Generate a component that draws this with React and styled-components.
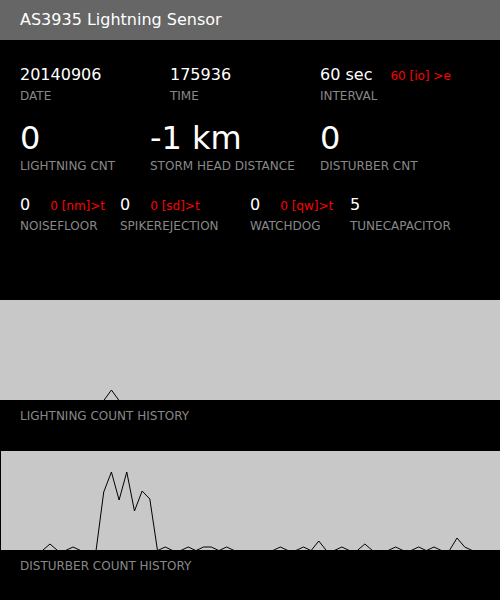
import React from 'react';
import styled, { createGlobalStyle } from 'styled-components';

const Global = createGlobalStyle`
  html, body { margin: 0; padding: 0; background: #000; }
  body { font-family: "DejaVu Sans", "Liberation Sans", sans-serif; }
`;

const Page = styled.div`
  width: 500px;
  height: 600px;
  background: #000;
  overflow: hidden;
  display: flex;
  flex-direction: column;
`;

const Header = styled.header`
  height: 40px;
  flex: none;
  background: #666666;
  color: #fff;
  font-size: 16px;
  line-height: 40px;
  padding-left: 20px;
`;

const StatRow = styled.div`
  display: grid;
  grid-template-columns: ${(p) => p.$cols};
  padding-left: 20px;
  margin-top: ${(p) => p.$top}px;
`;

const Cell = styled.div`
  display: flex;
  flex-direction: column;
`;

const ValueLine = styled.div`
  display: flex;
  align-items: baseline;
  white-space: nowrap;
  color: #fff;
  font-size: ${(p) => (p.$big ? 32 : 16)}px;
  line-height: ${(p) => (p.$big ? 35 : 22)}px;
`;

const Setting = styled.span`
  color: #f00;
  font-size: 12px;
  line-height: 1;
  margin-left: ${(p) => p.$gap}px;
`;

const Label = styled.div`
  color: #888;
  font-size: 12px;
  line-height: 20px;
  white-space: nowrap;
`;

const ChartBox = styled.div`
  height: ${(p) => p.$h}px;
  margin-top: ${(p) => p.$top}px;
  margin-left: ${(p) => p.$left}px;
  background: #c8c8c8;
  overflow: hidden;
  flex: none;
  svg { display: block; }
`;

const ChartLabel = styled(Label)`
  padding-left: 20px;
  margin-top: 6px;
`;

const Stat = ({ value, label, setting, gap = 20, big }) => (
  <Cell>
    <ValueLine $big={big}>
      <span>{value}</span>
      {setting && <Setting $gap={gap}>{setting}</Setting>}
    </ValueLine>
    <Label>{label}</Label>
  </Cell>
);

const disturber = { 6: 6, 9: 3, 13: 58, 14: 78, 15: 50, 16: 78, 17: 39, 18: 59, 19: 51, 21: 3, 24: 3, 26: 3, 27: 3, 29: 3, 36: 3, 39: 3, 41: 9, 44: 3, 47: 6, 51: 3, 54: 3, 56: 3, 59: 12, 60: 3 };
const lightning = { 14: 10 };

const Chart = ({ data, h, top, left }) => {
  const pts = [];
  for (let i = 0; i < 66; i++) {
    const v = data[i] || 0;
    const x = 3.9 + 7.68 * i - left;
    const y = v === 0 ? h + 0.6 : h - v;
    pts.push(`${x.toFixed(2)},${y.toFixed(2)}`);
  }
  return (
    <ChartBox $h={h} $top={top} $left={left}>
      <svg width={500 - left} height={h} viewBox={`0 0 ${500 - left} ${h}`}>
        <polyline points={pts.join(' ')} fill="none" stroke="#000" strokeWidth="1" />
      </svg>
    </ChartBox>
  );
};

export default function App() {
  return (
    <Page>
      <Global />
      <Header>AS3935 Lightning Sensor</Header>
      <StatRow $cols="150px 150px auto" $top={23.5}>
        <Stat value="20140906" label="DATE" />
        <Stat value="175936" label="TIME" />
        <Stat value="60 sec" label="INTERVAL" setting="60 [io] >e" gap={18} />
      </StatRow>
      <StatRow $cols="130px 170px auto" $top={15.5}>
        <Stat big value="0" label="LIGHTNING CNT" />
        <Stat big value="-1 km" label="STORM HEAD DISTANCE" />
        <Stat big value="0" label="DISTURBER CNT" />
      </StatRow>
      <StatRow $cols="100px 130px 100px auto" $top={18}>
        <Stat value="0" label="NOISEFLOOR" setting="0 [nm]>t" />
        <Stat value="0" label="SPIKEREJECTION" setting="0 [sd]>t" />
        <Stat value="0" label="WATCHDOG" setting="0 [qw]>t" />
        <Stat value="5" label="TUNECAPACITOR" />
      </StatRow>
      <Chart data={lightning} h={100} top={64} left={0} />
      <ChartLabel>LIGHTNING COUNT HISTORY</ChartLabel>
      <Chart data={disturber} h={99} top={25} left={1} />
      <ChartLabel>DISTURBER COUNT HISTORY</ChartLabel>
    </Page>
  );
}
